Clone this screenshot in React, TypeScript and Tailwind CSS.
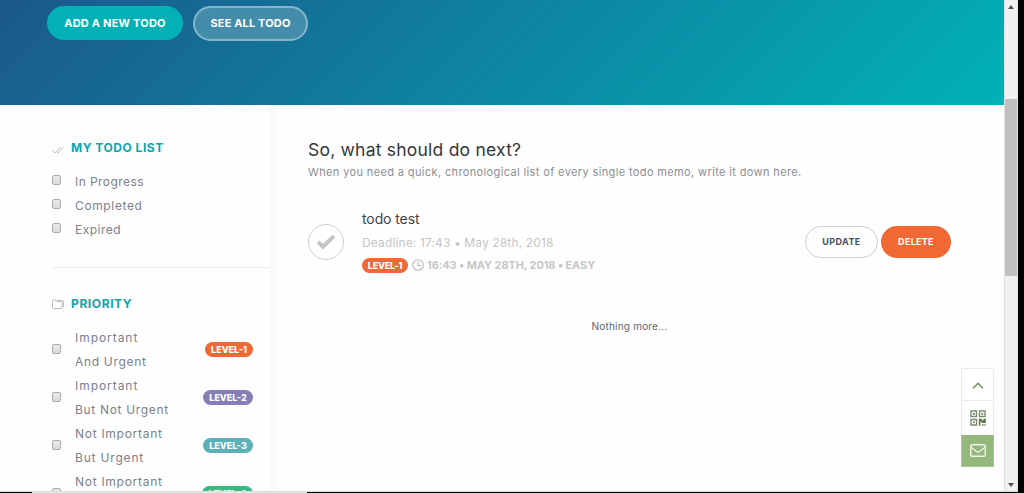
import React from "react";

function Check() {
  return (
    <span className="block h-[10px] w-[9px] shrink-0 rounded-[2px] border border-[#acacac] bg-linear-to-b from-[#e9e9e9] to-[#d9d9d9]" />
  );
}

const pill =
  "flex h-[15px] items-center justify-center rounded-full text-[9px] font-extrabold leading-none text-white";

const statuses = [
  { label: "In Progress", cls: "tracking-[0.44px]" },
  { label: "Completed", cls: "tracking-[0.63px]" },
  { label: "Expired", cls: "tracking-[0.5px]" },
];

const priorities = [
  { a: "Important", at: "tracking-[0.95px]", b: "And Urgent", bt: "tracking-[0.68px]", tag: "LEVEL-1", cls: "w-[48px] bg-[#f06834]" },
  { a: "Important", at: "tracking-[0.95px]", b: "But Not Urgent", bt: "tracking-[0.68px]", tag: "LEVEL-2", cls: "w-[50px] bg-[#857fb8]" },
  { a: "Not Important", at: "tracking-[0.72px]", b: "But Urgent", bt: "tracking-[0.82px]", tag: "LEVEL-3", cls: "w-[50px] bg-[#5cb1b8]" },
  { a: "Not Important", at: "tracking-[0.72px]", b: "", bt: "", tag: "LEVEL-4", cls: "w-[51px] bg-[#3bb883]" },
];

function Hero() {
  return (
    <header className="flex h-[105px] shrink-0 items-start bg-[linear-gradient(135deg,#1b588c_0%,#00b2b6_100%)] pl-[47px] pt-[6px] text-[11px] font-bold text-white">
      <button className="h-[34px] w-[136px] rounded-full bg-[#02b1b6] tracking-[0.22px]">ADD A NEW TODO</button>
      <button className="ml-[10px] h-[35px] w-[115px] rounded-full border-2 border-[#86b5cb] bg-[#438dab] tracking-[0.14px]">
        SEE ALL TODO
      </button>
    </header>
  );
}

function Sidebar() {
  return (
    <aside className="w-[269px] shrink-0 pl-[52px] text-[12px] text-[#7b818d]">
      <div className="mt-[30px] flex h-[24px] items-center">
        <svg className="mt-[5px]" width="12" height="8" viewBox="0 0 12 8" fill="none" stroke="#b9b9b9" strokeWidth="0.9">
          <path d="M0.5 4.5 3 7 8.5 1M5 6.2 6 7 11.5 1" />
        </svg>
        <h2 className="ml-[7px] pt-px text-[12px] font-bold tracking-[0.52px] text-[#0aa7b0]">MY TODO LIST</h2>
      </div>
      <ul className="mt-[10px]">
        {statuses.map((s) => (
          <li key={s.label} className="flex h-[24px] items-center">
            <span className="mb-[2px]">
              <Check />
            </span>
            <span className={`ml-[14px] pt-[2px] ${s.cls}`}>{s.label}</span>
          </li>
        ))}
      </ul>
      <hr className="mt-[26px] border-[#ededed]" />
      <div className="mt-[23px] flex h-[24px] items-center">
        <svg className="mt-[2px]" width="12" height="10" viewBox="0 0 12 10" fill="none" stroke="#b5b5b5" strokeWidth="0.9">
          <path d="M.5 2.5V8.5Q.5 9.5 1.5 9.5H9Q10 9.5 10 8.5V3.2Q10 2.5 9 2.5H5L4 1.2H1.3Q.5 1.2.5 2.5ZM5 1H6L6.7 1.5H10.5Q11.5 1.5 11.5 2.3V7.3Q11.5 8.3 10.2 8.3" />
        </svg>
        <h2 className="ml-[7px] pt-px text-[12px] font-bold tracking-[0.6px] text-[#0aa7b0]">PRIORITY</h2>
      </div>
      <ul className="mt-[10px]">
        {priorities.map((p) => (
          <li key={p.tag} className="flex h-[48px] items-center pr-[16px]">
            <Check />
            <span className="ml-[14px] flex h-[48px] flex-col pt-px leading-[24px]">
              <span className={p.at}>{p.a}</span>
              {p.b && <span className={p.bt}>{p.b}</span>}
            </span>
            <span className={`ml-auto ${pill} ${p.cls}`}>{p.tag}</span>
          </li>
        ))}
      </ul>
    </aside>
  );
}

function Todo() {
  return (
    <main className="min-w-0 flex-1 pl-[28px] pt-[33px]">
      <h1 className="h-[24px] text-[17.5px] leading-[24px] tracking-[0.22px] text-[#34373c]">So, what should do next?</h1>
      <p className="h-[20px] text-[11px] leading-[20px] tracking-[0.37px] text-[#8b8f94]">
        When you need a quick, chronological list of every single todo memo, write it down here.
      </p>
      <section className="mt-[20px] flex h-[80px] items-center pr-[53px]">
        <span className="flex h-[36px] w-[36px] items-center justify-center rounded-full border border-[#cecece]">
          <svg width="20" height="16" viewBox="0 0 20 16" fill="none" stroke="#c5c5c5" strokeWidth="4">
            <path d="M2 8 7 12.8 18 2" />
          </svg>
        </span>
        <div className="ml-[18px]">
          <h3 className="h-[23px] text-[14px] leading-[22px] tracking-[-0.1px] text-[#3e4247]">todo test</h3>
          <p className="h-[23px] text-[12px] leading-[23px] tracking-[0.13px] text-[#c5c6c7]">Deadline: 17:43 • May 28th, 2018</p>
          <div className="flex h-[23px] items-center text-[11px] font-bold text-[#c5c6c7]">
            <span className={`w-[46px] tracking-[-0.2px] bg-[#f06834] ${pill}`}>LEVEL-1</span>
            <svg className="ml-[4px] mr-[3px]" width="12" height="12" viewBox="0 0 12 12" fill="none" stroke="#b9b9b9" strokeWidth="1.1">
              <circle cx="6" cy="6" r="5.3" />
              <path d="M6 2.5V6.5H9" />
            </svg>
            <span className="tracking-[-0.1px]">16:43 • MAY 28TH, 2018 • EASY</span>
          </div>
        </div>
        <button className="ml-auto h-[32px] w-[73px] rounded-full border border-[#cfcfcf] text-[9px] font-bold tracking-[0.4px] text-[#494e58]">
          UPDATE
        </button>
        <button className="ml-[3px] h-[32px] w-[70px] rounded-full bg-[#f06834] text-[9px] font-bold tracking-[0.3px] text-white">
          DELETE
        </button>
      </section>
      <p className="mt-[34px] text-center text-[10px] leading-[20px] tracking-[0.2px] text-[#5e656b]">
        <span className="mr-[53px]">Nothing more...</span>
      </p>
    </main>
  );
}

function QuickTools() {
  return (
    <div className="absolute left-[961px] top-[368px] flex h-[99px] w-[33px] flex-col border border-[#ebebeb] bg-white">
      <span className="flex h-[32px] items-center justify-center border-b border-[#ebebeb]">
        <svg className="mt-[2px]" width="12" height="7" viewBox="0 0 12 7" fill="none" stroke="#71905b" strokeWidth="1.6">
          <path d="M1 6.3 6 1.3 11 6.3" />
        </svg>
      </span>
      <span className="flex h-[34px] items-center justify-center">
        <svg width="16" height="16" viewBox="0 0 16 16" fill="none">
          <path stroke="#7f8b76" strokeWidth="1.4" d="M1 1H6.5V6.5H1ZM9.5 1H15V6.5H9.5ZM1 9.5H6.5V15H1Z" />
          <path fill="#5c7546" d="M3 3H4.7V4.7H3ZM11.4 3H13.1V4.7H11.4ZM3 11.4H4.7V13.1H3ZM8.8 8.8H12V10.3H13.5V8.8H15.8V13H11.5V11.5H10.4V15.8H8.8ZM12 14.2H13.5V15.8H12ZM14.5 14.2H15.8V15.8H14.5Z" />
        </svg>
      </span>
      <span className="-mx-px -mb-px flex flex-1 items-center justify-center border-x border-b border-[#a9c497] bg-[#94b77b]">
        <svg width="16" height="13" viewBox="0 0 16 13" fill="none" stroke="#eef3ea" strokeWidth="1.4">
          <rect x=".7" y=".7" width="14.6" height="11.6" rx="1.4" />
          <path d="M.8 3 6.8 7.7Q8 8.5 9.2 7.7L15.2 3" />
        </svg>
      </span>
    </div>
  );
}

function Scrollbar() {
  return (
    <div className="flex w-[14px] shrink-0 flex-col items-center border-x border-[#e1e1e1] bg-[#f0f0f0]">
      <svg className="mt-[5px] shrink-0" width="6" height="4" viewBox="0 0 6 4">
        <path fill="#505050" d="M3 0 6 4H0Z" />
      </svg>
      <div className="mt-[90px] h-[177px] w-full shrink-0 bg-[#c0c0c0]" />
      <svg className="mb-[4px] mt-auto shrink-0" width="6" height="4" viewBox="0 0 6 4">
        <path fill="#505050" d="M0 0H6L3 4Z" />
      </svg>
    </div>
  );
}

export default function App() {
  return (
    <div className="relative flex h-[493px] w-[1024px] flex-col overflow-hidden bg-black font-['Inter','Liberation_Sans',sans-serif]">
      <div className="flex h-[491px] shrink-0 pr-[6px]">
        <div className="flex h-full min-w-0 flex-1 flex-col overflow-hidden bg-[#fefefe]">
          <Hero />
          <div className="flex min-h-0 flex-1 overflow-hidden">
            <Sidebar />
            <div className="w-[11px] shrink-0 bg-linear-to-r from-[#f9f9f9] to-[#fefefe]" />
            <Todo />
          </div>
        </div>
        <Scrollbar />
      </div>
      <div className="h-px w-[1018px] bg-[#dcdcdc]" />
      <div className="ml-[32px] h-px w-[275px] bg-[#e8e8e8]" />
      <QuickTools />
    </div>
  );
}
